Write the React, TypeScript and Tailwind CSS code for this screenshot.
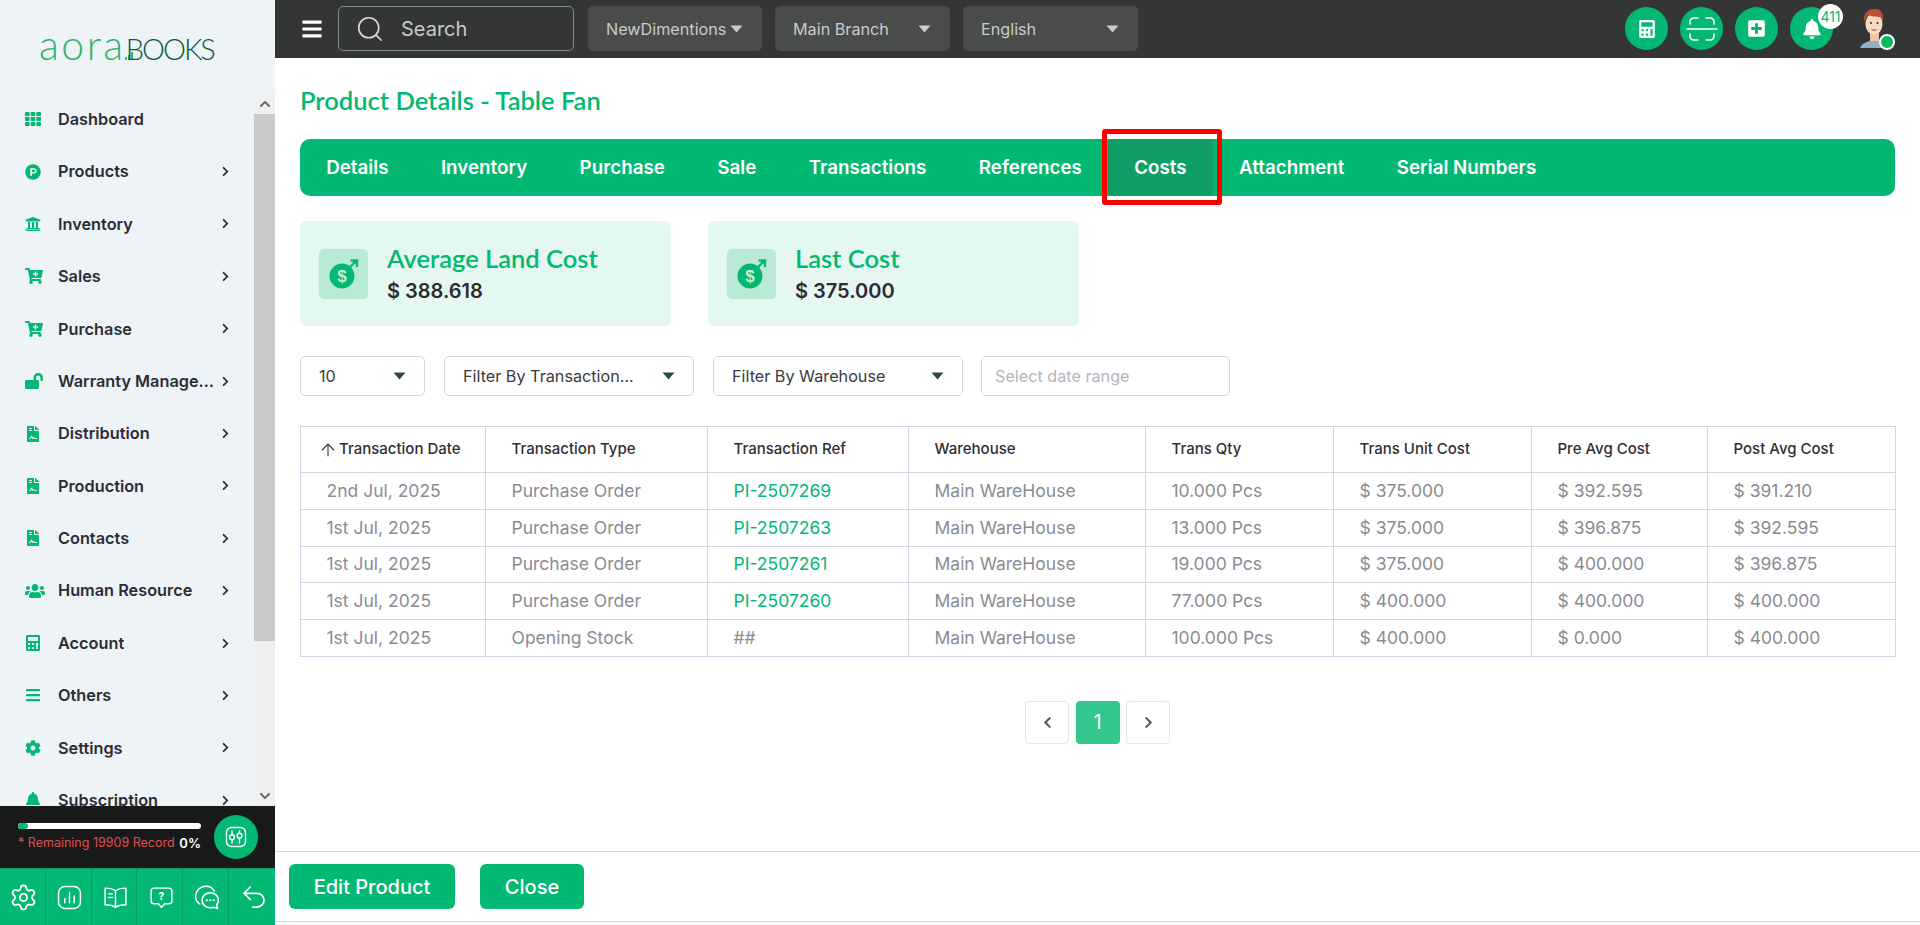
import type { ReactNode } from "react";
import {
  FaBars,
  FaBell,
  FaCalculator,
  FaCartPlus,
  FaChevronDown,
  FaChevronLeft,
  FaChevronRight,
  FaChevronUp,
  FaCog,
  FaFileContract,
  FaLockOpen,
  FaPlusSquare,
  FaProductHunt,
  FaTh,
  FaUniversity,
  FaUsers,
} from "react-icons/fa";
import { ArrowUp, Search, Settings, Undo2 } from "lucide-react";

const navItems: { label: string; icon: ReactNode; arrow?: boolean }[] = [
  { label: "Dashboard", icon: <FaTh size={16} /> },
  { label: "Products", icon: <FaProductHunt size={16} />, arrow: true },
  { label: "Inventory", icon: <FaUniversity size={16} />, arrow: true },
  { label: "Sales", icon: <FaCartPlus size={18} />, arrow: true },
  { label: "Purchase", icon: <FaCartPlus size={18} />, arrow: true },
  { label: "Warranty Management", icon: <FaLockOpen size={18} />, arrow: true },
  { label: "Distribution", icon: <FaFileContract size={16} />, arrow: true },
  { label: "Production", icon: <FaFileContract size={16} />, arrow: true },
  { label: "Contacts", icon: <FaFileContract size={16} />, arrow: true },
  { label: "Human Resource", icon: <FaUsers size={20} />, arrow: true },
  { label: "Account", icon: <FaCalculator size={16} />, arrow: true },
  { label: "Others", icon: <FaBars size={16} />, arrow: true },
  { label: "Settings", icon: <FaCog size={16} />, arrow: true },
  { label: "Subscription", icon: <FaBell size={16} />, arrow: true },
];

const tabs = ["Details", "Inventory", "Purchase", "Sale", "Transactions", "References", "Costs", "Attachment", "Serial Numbers"];

const rows = [
  ["2nd Jul, 2025", "Purchase Order", "PI-2507269", "Main WareHouse", "10.000 Pcs", "$ 375.000", "$ 392.595", "$ 391.210"],
  ["1st Jul, 2025", "Purchase Order", "PI-2507263", "Main WareHouse", "13.000 Pcs", "$ 375.000", "$ 396.875", "$ 392.595"],
  ["1st Jul, 2025", "Purchase Order", "PI-2507261", "Main WareHouse", "19.000 Pcs", "$ 375.000", "$ 400.000", "$ 396.875"],
  ["1st Jul, 2025", "Purchase Order", "PI-2507260", "Main WareHouse", "77.000 Pcs", "$ 400.000", "$ 400.000", "$ 400.000"],
  ["1st Jul, 2025", "Opening Stock", "##", "Main WareHouse", "100.000 Pcs", "$ 400.000", "$ 0.000", "$ 400.000"],
];

const headers = ["Transaction Type", "Transaction Ref", "Warehouse", "Trans Qty", "Trans Unit Cost", "Pre Avg Cost", "Post Avg Cost"];

function Caret({ className }: { className: string }) {
  return (
    <svg width="13" height="8" viewBox="0 0 13 8" className={className}>
      <path d="M0.5 0.5h12L6.5 7.5z" fill="currentColor" />
    </svg>
  );
}

function HeaderSelect({ label, width }: { label: string; width: string }) {
  return (
    <div className={`${width} flex h-[45px] items-center justify-between rounded-[5px] bg-[#4a4c4b] pl-[18px] pr-[19px] text-[16.200px] text-[#c9cbca]`}>
      <span className="pt-[2px]">{label}</span>
      <Caret className="mt-[1px] text-[#c9cbca]" />
    </div>
  );
}

function FilterSelect({ label, width }: { label: string; width: string }) {
  return (
    <div className={`${width} flex h-10 items-center justify-between rounded-[5px] border border-[#d6d4e4] bg-white pl-[18px] pr-[18px] text-[16.200px] text-[#3b3b40]`}>
      <span className="pt-[1px]">{label}</span>
      <Caret className="text-[#2c4a45]" />
    </div>
  );
}

function CircleButton({ children }: { children: ReactNode }) {
  return (
    <div className="relative flex h-[43px] w-[43px] items-center justify-center rounded-full bg-[#03b872] text-white">
      {children}
    </div>
  );
}

function CostCard({ title, amount }: { title: string; amount: string }) {
  return (
    <div className="flex h-[105px] w-[371px] items-center rounded-[6px] bg-[#e5f7f1] pl-[19px]">
      <div className="flex h-[50px] w-[49px] items-center justify-center rounded-[5px] bg-[#b8ead5]">
        <svg width="34" height="34" viewBox="0 0 34 34">
          <circle cx="15" cy="19" r="12.5" fill="#03b872" />
          <path d="M22 11l7-7M23.5 3.5h6.5v6.5" stroke="#03b872" strokeWidth="2.4" fill="none" />
          <text x="15" y="25" textAnchor="middle" fontSize="17" fontWeight="700" fill="#c4f0de" fontFamily="'Liberation Sans', sans-serif">$</text>
        </svg>
      </div>
      <div className="ml-[19px]">
        <div className="font-['Lato',sans-serif] text-[25.500px] font-semibold leading-[32px] text-[#03b872]">{title}</div>
        <div className="mt-[3px] text-[20px] font-semibold leading-[28px] text-[#2b2b30]">{amount}</div>
      </div>
    </div>
  );
}

function Logo() {
  return (
    <div className="flex items-baseline pl-[39px] pt-[24px] leading-none">
      <span className="font-['Lato',sans-serif] text-[41px] font-light tracking-[2.500px] text-[#2db56b]">aora</span>
      <svg width="10" height="12" viewBox="0 0 10 12" className="-ml-[1px] -mr-[9px]">
        <path d="M0 9h2v3H0zM3 7h2v5H3zM6 4h2v8H6z" fill="#2db56b" />
      </svg>
      <span className="font-['Lato',sans-serif] text-[29px] font-light tracking-[-2px] text-[#0c5c38]">BOOKS</span>
    </div>
  );
}

function Sidebar() {
  return (
    <aside className="flex h-full w-[275px] shrink-0 flex-col bg-[#eef3f8]">
      <div className="h-[93px] shrink-0">
        <Logo />
      </div>

      <div className="flex min-h-0 flex-1">
        <nav className="w-[254px] overflow-hidden">
          {navItems.map((item) => (
            <div key={item.label} className="flex h-[52.400px] items-center pl-[25px]">
              <span className="flex w-[33px] shrink-0 items-center text-[#03b872]">{item.icon}</span>
              <span className="w-[158px] truncate text-[16.300px] font-semibold text-[#2c2c34]">{item.label}</span>
              {item.arrow && <FaChevronRight size={11} className="ml-[4px] text-[#2c2c34]" />}
            </div>
          ))}
        </nav>
        <div className="flex w-[21px] flex-col bg-[#f0f0f0]">
          <div className="flex h-[21px] items-center justify-center text-[#666]">
            <FaChevronUp size={12} />
          </div>
          <div className="h-[527px] bg-[#c9c9c9]" />
          <div className="flex-1" />
          <div className="flex h-[21px] items-center justify-center text-[#666]">
            <FaChevronDown size={12} />
          </div>
        </div>
      </div>

      <div className="flex h-[62px] shrink-0 items-center bg-[#171a19] pl-[18px]">
        <div className="w-[183px]">
          <div className="h-[6px] overflow-hidden rounded-full bg-white">
            <div className="h-full w-[10px] rounded-full bg-[#03b872]" />
          </div>
          <div className="mt-[5px] flex items-center justify-between text-[13px] leading-[18px]">
            <span className="whitespace-nowrap text-[12.500px] text-[#e04f4f]">* Remaining 19909 Record</span>
            <span className="font-semibold text-white">0%</span>
          </div>
        </div>
        <div className="ml-[13px] flex h-[44px] w-[44px] items-center justify-center rounded-full bg-[#03b872]">
          <svg width="24" height="24" viewBox="0 0 24 24" fill="none" stroke="white" strokeWidth="1.4" strokeLinecap="round">
            <rect x="2.5" y="2.5" width="19" height="19" rx="5" />
            <path d="M8 6v3.5M8 15v3M15.5 6v2M15.5 13.5V18" />
            <circle cx="8" cy="12.2" r="2.4" />
            <circle cx="15.5" cy="10.7" r="2.4" />
          </svg>
        </div>
      </div>

      <div className="grid h-[57px] shrink-0 grid-cols-6 border-t border-[#0a9c63] bg-[#03b872] text-white">
        <div className="flex items-center justify-center border-r border-[#0a9c63] pl-[3px]">
          <Settings size={29} strokeWidth={1.4} />
        </div>
        <div className="flex items-center justify-center border-r border-[#0a9c63] pl-[2px]">
          <svg width="25" height="25" viewBox="0 0 24 24" fill="none" stroke="currentColor" strokeWidth="1.4" strokeLinecap="round">
            <rect x="1.5" y="1.5" width="21" height="21" rx="6" />
            <path d="M7.5 17v-4M12 17V7M16.5 17v-6.5" />
          </svg>
        </div>
        <div className="flex items-center justify-center border-r border-[#0a9c63] pl-[3px]">
          <svg width="25" height="25" viewBox="0 0 24 24" fill="none" stroke="currentColor" strokeWidth="1.4" strokeLinejoin="round" strokeLinecap="round">
            <path d="M12 5.500C9.500 3.800 6 3 2 3v16c4 0 7.500.8 10 2.500 2.500-1.700 6-2.500 10-2.500V3c-4 0-7.500.8-10 2.500zM12 5.500v16" />
            <path d="M5.500 8.500h3.500M5.500 12h3.500" />
          </svg>
        </div>
        <div className="flex items-center justify-center border-r border-[#0a9c63] pl-[3px]">
          <svg width="25" height="25" viewBox="0 0 24 24" fill="none" stroke="currentColor" strokeWidth="1.4" strokeLinejoin="round">
            <path d="M5 3h14a3 3 0 0 1 3 3v9a3 3 0 0 1-3 3h-4l-3 3.500L9 18H5a3 3 0 0 1-3-3V6a3 3 0 0 1 3-3z" />
            <text x="12" y="14.500" textAnchor="middle" fontSize="10" fontWeight="700" stroke="none" fill="currentColor" fontFamily="Inter, sans-serif">?</text>
          </svg>
        </div>
        <div className="flex items-center justify-center border-r border-[#0a9c63] pl-[3px]">
          <svg width="26" height="26" viewBox="0 0 24 24" fill="none" stroke="currentColor" strokeWidth="1.4" strokeLinecap="round">
            <path d="M5.500 18.500C3 17 1.500 14.500 1.500 11.500 1.500 6.500 5.500 2 11 2c3.500 0 6.200 1.700 7.800 4.500" />
            <path d="M15 8c4.400 0 7.500 3.200 7.500 7 0 1.500-.5 3-1.500 4.200l.6 3.300-3.500-1c-.9.4-1.900.5-3.100.5-4.200 0-7.500-3-7.500-7 0-3.800 3.300-7 7.500-7z" />
            <path d="M11.800 15h.1M15 15h.1M18.200 15h.1" strokeWidth="2" />
          </svg>
        </div>
        <div className="flex items-center justify-center pl-[3px]">
          <Undo2 size={30} strokeWidth={1.4} />
        </div>
      </div>
    </aside>
  );
}

function Avatar() {
  return (
    <div className="relative h-[58px] w-[50px]">
      <svg width="50" height="58" viewBox="0 0 50 58">
        <path d="M10 48c2-5 8-7 14-8l6 0c3 1 4 1 6 3v5z" fill="#8fb0c4" />
        <rect x="20" y="32" width="9" height="9" fill="#eec3a6" />
        <ellipse cx="24" cy="24" rx="8.500" ry="11" fill="#f7d8c1" />
        <path d="M14 23c-1-9 3-14 10-14 7-1 10 5 9 13l-2-5c-5 0-11-1-13-2-2 2-3 5-4 8z" fill="#b94f38" />
        <circle cx="21" cy="23" r="1" fill="#3a2a25" />
        <circle cx="27.500" cy="23" r="1" fill="#3a2a25" />
        <path d="M21.500 30h5" stroke="#8a4a3a" strokeWidth="1" />
      </svg>
      <span className="absolute left-[29px] top-[34px] h-4 w-4 rounded-full border-[2.500px] border-white bg-[#08b85e]" />
    </div>
  );
}

function Topbar() {
  return (
    <header className="flex h-[58px] shrink-0 items-start bg-[#333635] pl-[26px] pt-[6px]">
      <div className="flex h-[45px] w-[22px] items-center text-white">
        <FaBars size={22} />
      </div>
      <div className="ml-[15px] flex h-[45px] w-[236px] items-center rounded-[5px] border border-[#7e8a86] pl-[16px] text-[#d9dbda]">
        <Search size={30} strokeWidth={1.3} className="shrink-0" />
        <span className="ml-[16px] text-[20px] text-[#c9cbca]">Search</span>
      </div>
      <div className="ml-[14px] flex gap-[13px]">
        <HeaderSelect label="NewDimentions" width="w-[174px]" />
        <HeaderSelect label="Main Branch" width="w-[175px]" />
        <HeaderSelect label="English" width="w-[175px]" />
      </div>
      <div className="ml-auto flex h-[45px] items-center pr-[20px]">
        <div className="flex gap-[12px]">
          <CircleButton>
            <FaCalculator size={18} />
          </CircleButton>
          <CircleButton>
            <svg width="32" height="26" viewBox="0 0 32 26" fill="none" stroke="white" strokeWidth="1.6" strokeLinecap="round">
              <path d="M4 8V6a4 4 0 0 1 4-4h4M20 2h4a4 4 0 0 1 4 4v2M4 18v2a4 4 0 0 0 4 4h4M20 24h4a4 4 0 0 0 4-4v-2M1 13h30" />
            </svg>
          </CircleButton>
          <CircleButton>
            <FaPlusSquare size={19} />
          </CircleButton>
          <CircleButton>
            <FaBell size={20} />
            <span className="absolute left-[28px] top-[-3px] flex h-[25px] w-[25px] items-center justify-center rounded-full bg-white text-[14px] text-[#03b872]">
              411
            </span>
          </CircleButton>
        </div>
        <div className="ml-[17px]">
          <Avatar />
        </div>
      </div>
    </header>
  );
}

function CostsTable() {
  const cell = "border border-[#d6d4e4] pl-[25.500px] text-left";
  return (
    <table className="mt-[30px] w-[1595px] table-fixed border-collapse">
      <colgroup>
        <col className="w-[185px]" />
        <col className="w-[222px]" />
        <col className="w-[201px]" />
        <col className="w-[237px]" />
        <col className="w-[188px]" />
        <col className="w-[198px]" />
        <col className="w-[176px]" />
        <col className="w-[188px]" />
      </colgroup>
      <thead>
        <tr className="h-[46px] text-[15px] font-medium text-[#2f2f35]">
          <th className="border border-[#d6d4e4] pl-[17px] text-left font-medium">
            <span className="flex items-center gap-[1px]">
              <ArrowUp size={20} strokeWidth={1.3} />
              Transaction Date
            </span>
          </th>
          {headers.map((h) => (
            <th key={h} className={`${cell} font-medium`}>
              {h}
            </th>
          ))}
        </tr>
      </thead>
      <tbody>
        {rows.map((row) => (
          <tr key={row[2]} className="h-[36.800px] text-[17.500px] text-[#8b8b94]">
            {row.map((value, i) => (
              <td key={i} className={`${cell} ${i === 2 && value !== "##" ? "text-[#03b872]" : ""}`}>
                {value}
              </td>
            ))}
          </tr>
        ))}
      </tbody>
    </table>
  );
}

export default function App() {
  return (
    <div className="flex h-[925px] w-full overflow-hidden bg-white font-['Inter',sans-serif]">
      <Sidebar />
      <div className="flex min-w-0 flex-1 flex-col">
        <Topbar />

        <main className="relative min-h-0 flex-1 pl-[25px] pt-[27px]">
          <h1 className="font-['Lato',sans-serif] text-[25.500px] font-semibold leading-[30px] text-[#03b872]">
            Product Details - Table Fan
          </h1>

          <div className="relative mt-[24px] flex h-[57px] w-[1595px] items-center rounded-[10px] bg-[#03b872]">
            {tabs.map((tab) => (
              <div
                key={tab}
                className={`flex h-[57px] items-center rounded-[4px] px-[26.200px] pt-[1px] text-[18.800px] font-semibold text-white ${tab === "Costs" ? "bg-[#109e66]" : ""}`}
              >
                {tab}
              </div>
            ))}
            {/* red annotation around the active tab */}
            <div className="absolute left-[802px] top-[-10px] h-[76px] w-[120px] rounded-[3px] border-[5px] border-[#ff0000]" />
          </div>

          <div className="mt-[25px] flex gap-[37px]">
            <CostCard title="Average Land Cost" amount="$ 388.618" />
            <CostCard title="Last Cost" amount="$ 375.000" />
          </div>

          <div className="mt-[30px] flex gap-[19px]">
            <FilterSelect label="10" width="w-[125px]" />
            <FilterSelect label="Filter By Transaction..." width="w-[250px]" />
            <FilterSelect label="Filter By Warehouse" width="w-[250px]" />
            <div className="-ml-[1px] flex h-10 w-[249px] items-center rounded-[5px] border border-[#d6d4e4] pl-[13px] pt-[1px] text-[16.200px] text-[#b4b4bc]">
              Select date range
            </div>
          </div>

          <CostsTable />

          <div className="mt-[44px] flex justify-center gap-[6.500px] pr-[25px]">
            <div className="flex h-[43px] w-[44px] items-center justify-center rounded-[4px] border border-[#e6e6e6] text-[#55565a]">
              <FaChevronLeft size={13} />
            </div>
            <div className="flex h-[43px] w-[44px] items-center justify-center rounded-[4px] bg-[#33c78e] text-[20px] text-white">
              1
            </div>
            <div className="flex h-[43px] w-[44px] items-center justify-center rounded-[4px] border border-[#e6e6e6] text-[#55565a]">
              <FaChevronRight size={13} />
            </div>
          </div>
        </main>

        <footer className="mb-[3px] flex h-[71px] shrink-0 gap-[25px] border-y border-[#d6d4e4] pl-[14px] pt-[12px]">
          <button className="h-[45px] w-[166px] rounded-[6px] bg-[#03b872] text-[20px] font-medium text-white">Edit Product</button>
          <button className="h-[45px] w-[104px] rounded-[6px] bg-[#03b872] text-[20px] font-medium text-white">Close</button>
        </footer>
      </div>
    </div>
  );
}
